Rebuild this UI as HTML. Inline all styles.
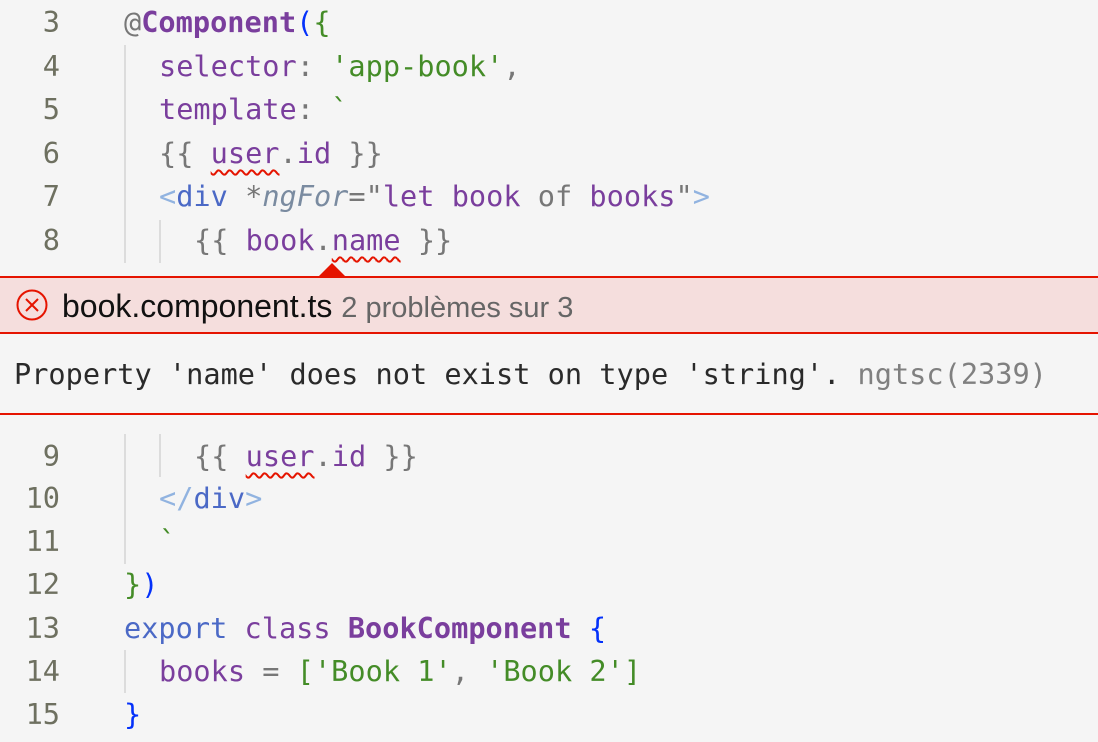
<!DOCTYPE html>
<html><head><meta charset="utf-8"><style>
html,body{margin:0;padding:0;}
body{width:1098px;height:742px;background:#f5f5f5;position:relative;overflow:hidden;font-family:"DejaVu Sans Mono","Liberation Mono",monospace;font-size:28.6px;}
.l{position:absolute;left:0;height:44px;line-height:44px;white-space:pre;}
.n{position:absolute;right:1038px;color:#6e7060;text-align:right;}
.c{position:absolute;}
.g{position:absolute;width:2px;background:#dcdcdc;}
.p{color:#7a3e9d}.b{font-weight:bold;color:#7a3e9d}.gr{color:#448c27}.k{color:#777}.bl{color:#0431fa}
.t{color:#4b69c6}.tl{color:#91b3e0}.i{font-style:italic;color:#7a8ba0}.kw{color:#4b69c6}
.sq{text-decoration:underline wavy #e51400;text-decoration-thickness:2px;text-underline-offset:6px;}
</style></head><body>
<div class="g" style="left:124px;top:45px;height:218px"></div>
<div class="g" style="left:159px;top:220px;height:43px"></div>
<div class="g" style="left:124px;top:434px;height:130px"></div>
<div class="g" style="left:159px;top:434px;height:43px"></div>
<div class="g" style="left:124px;top:650px;height:43px"></div>

<div class="l" style="top:0"><span class="n" style="left:0;width:60px">3</span><span class="c" style="left:124px"><span class="k">@</span><span class="b">Component</span><span class="bl">(</span><span class="gr">{</span></span></div>
<div class="l" style="top:44px"><span class="n" style="left:0;width:60px">4</span><span class="c" style="left:159px"><span class="p">selector</span><span class="k">: </span><span class="gr">'app-book'</span><span class="k">,</span></span></div>
<div class="l" style="top:87px"><span class="n" style="left:0;width:60px">5</span><span class="c" style="left:159px"><span class="p">template</span><span class="k">: </span><span class="gr">`</span></span></div>
<div class="l" style="top:131px"><span class="n" style="left:0;width:60px">6</span><span class="c" style="left:159px"><span class="k">{{ </span><span class="p sq">user</span><span class="k">.</span><span class="p">id</span><span class="k"> }}</span></span></div>
<div class="l" style="top:174px"><span class="n" style="left:0;width:60px">7</span><span class="c" style="left:159px"><span class="tl">&lt;</span><span class="t">div</span><span class="k"> *</span><span class="i">ngFor</span><span class="k">="</span><span class="p">let book </span><span class="k">of</span><span class="p"> books</span><span class="k">"</span><span class="tl">&gt;</span></span></div>
<div class="l" style="top:218px"><span class="n" style="left:0;width:60px">8</span><span class="c" style="left:194px"><span class="k">{{ </span><span class="p">book</span><span class="k">.</span><span class="p sq">name</span><span class="k"> }}</span></span></div>

<svg style="position:absolute;left:0;top:260px" width="1098" height="160">
<polygon points="318,17 332,3 346,17" fill="#e51400"/>
<rect x="0" y="17" width="1098" height="56" fill="#f5dedd"/>
<rect x="0" y="16" width="1098" height="2" fill="#e51400"/>
<rect x="0" y="72" width="1098" height="2" fill="#e51400"/>
<rect x="0" y="153" width="1098" height="2" fill="#e51400"/>
<circle cx="32" cy="45" r="14.5" fill="none" stroke="#e51400" stroke-width="2"/>
<path d="M26 39 L38 51 M38 39 L26 51" stroke="#e51400" stroke-width="2"/>
</svg>
<div style="position:absolute;left:62px;top:282px;line-height:48px;font-family:'Liberation Sans',sans-serif;font-size:32px;white-space:pre;color:#111">book.component.ts <span style="color:#666;font-size:29px">2 problèmes sur 3</span></div>
<div class="l" style="top:352px;left:14px;color:#2a2a2a">Property 'name' does not exist on type 'string'. <span style="color:#808080">ngtsc(2339)</span></div>

<div class="l" style="top:434px"><span class="n" style="left:0;width:60px">9</span><span class="c" style="left:194px"><span class="k">{{ </span><span class="p sq">user</span><span class="k">.</span><span class="p">id</span><span class="k"> }}</span></span></div>
<div class="l" style="top:476px"><span class="n" style="left:0;width:60px">10</span><span class="c" style="left:159px"><span class="tl">&lt;/</span><span class="t">div</span><span class="tl">&gt;</span></span></div>
<div class="l" style="top:519px"><span class="n" style="left:0;width:60px">11</span><span class="c" style="left:159px"><span class="gr">`</span></span></div>
<div class="l" style="top:562px"><span class="n" style="left:0;width:60px">12</span><span class="c" style="left:124px"><span class="gr">}</span><span class="bl">)</span></span></div>
<div class="l" style="top:606px"><span class="n" style="left:0;width:60px">13</span><span class="c" style="left:124px"><span class="kw">export</span> <span class="p">class</span> <span class="b">BookComponent</span> <span class="bl">{</span></span></div>
<div class="l" style="top:649px"><span class="n" style="left:0;width:60px">14</span><span class="c" style="left:159px"><span class="p">books</span><span class="k"> = </span><span class="gr">[</span><span class="gr">'Book 1'</span><span class="k">, </span><span class="gr">'Book 2'</span><span class="gr">]</span></span></div>
<div class="l" style="top:692px"><span class="n" style="left:0;width:60px">15</span><span class="c" style="left:124px"><span class="bl">}</span></span></div>
</body></html>
